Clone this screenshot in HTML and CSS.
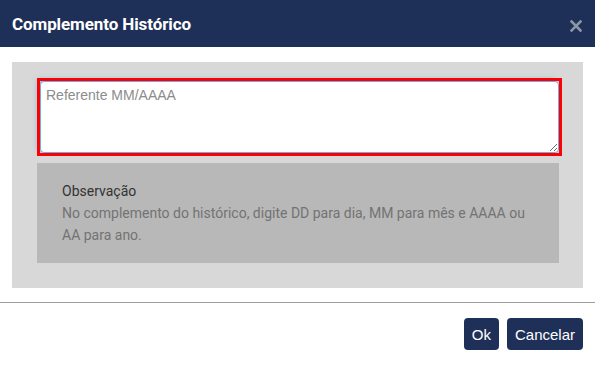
FILE: index.html
```html
<!DOCTYPE html>
<html lang="pt-BR">
<head>
    <meta charset="UTF-8">
    <title>Complemento Histórico</title>
    <link rel="stylesheet" href="styles.css">
</head>
<body>
<section class="modal">
    <div class="modal-header">
        <h4 class="title">Complemento Histórico</h4>
        <a href="javascript:;" class="close">
            <svg width="12" height="12" viewBox="0 0 12 12"><path d="M1.5 1.5L10.5 10.5M10.5 1.5L1.5 10.5" stroke="#8d95a8" stroke-width="2.6" stroke-linecap="square"/></svg>
        </a>
    </div>
    <div class="modal-body">
        <div class="panel">
            <div class="field">
                <textarea class="input">Referente MM/AAAA</textarea>
            </div>
            <div class="note">
                <div class="note-title">Observação</div>
                <p>No complemento do histórico, digite DD para dia, MM para mês e AAAA ou AA para ano.</p>
            </div>
        </div>
    </div>
    <div class="modal-footer">
        <button class="btn">Ok</button>
        <button class="btn">Cancelar</button>
    </div>
</section>
</body>
</html>
```
FILE: styles.css
```css
html,body{ height:100%; }
body,p,h4{ margin:0; padding:0; }
body{ background:#fff; font-family:Roboto, "Liberation Sans", sans-serif; }
.modal{ width:595px; height:365px; overflow:hidden; }
.modal-header{
    height:47px;
    background:#1f3058;
    display:flex;
    align-items:center;
    justify-content:space-between;
    padding:0 13px 0 12px;
    box-sizing:border-box;
}
.modal-header .title{
    color:#fff;
    font-size:17px;
    font-weight:700;
    letter-spacing:-0.1px;
    margin-top:1px;
}
.modal-header .close{ display:block; width:12px; height:12px; margin-top:5px; }
.modal-header .close svg{ display:block; }
.modal-body{ padding:15px 12px 14px; border-bottom:1px solid #9d9d9d; }
.panel{
    background:#d8d8d8;
    padding:19px 24px 25px 25px;
}
.field{ margin-left:3px; outline:3px solid #f00; height:72px; }
.input{
    display:block;
    width:100%;
    height:72px;
    box-sizing:border-box;
    border:1px solid #66afe9;
    border-radius:4px;
    box-shadow:-3px -2px 5px rgba(102,175,233,.7);
    padding:5px;
    font-family:"Liberation Sans", Arial, sans-serif;
    font-size:14px;
    line-height:16px;
    color:#8c8c8c;
    resize:vertical;
    outline:none;
}
.note{
    margin-top:10px;
    background:#b8b8b8;
    padding:18px 25px 17px;
    font-size:14px;
    line-height:21px;
}
.note-title{ color:#333; }
.note p{ color:#737373; line-height:22px; }
.modal-footer{
    display:flex;
    justify-content:flex-end;
    gap:8px;
    padding:15px 12px;
}
.btn{
    height:32px;
    padding:0 8px;
    border:0;
    border-radius:4px;
    background:#1f3058;
    color:#fff;
    font-family:"Liberation Sans", Arial, sans-serif;
    font-size:15px;
}
```
